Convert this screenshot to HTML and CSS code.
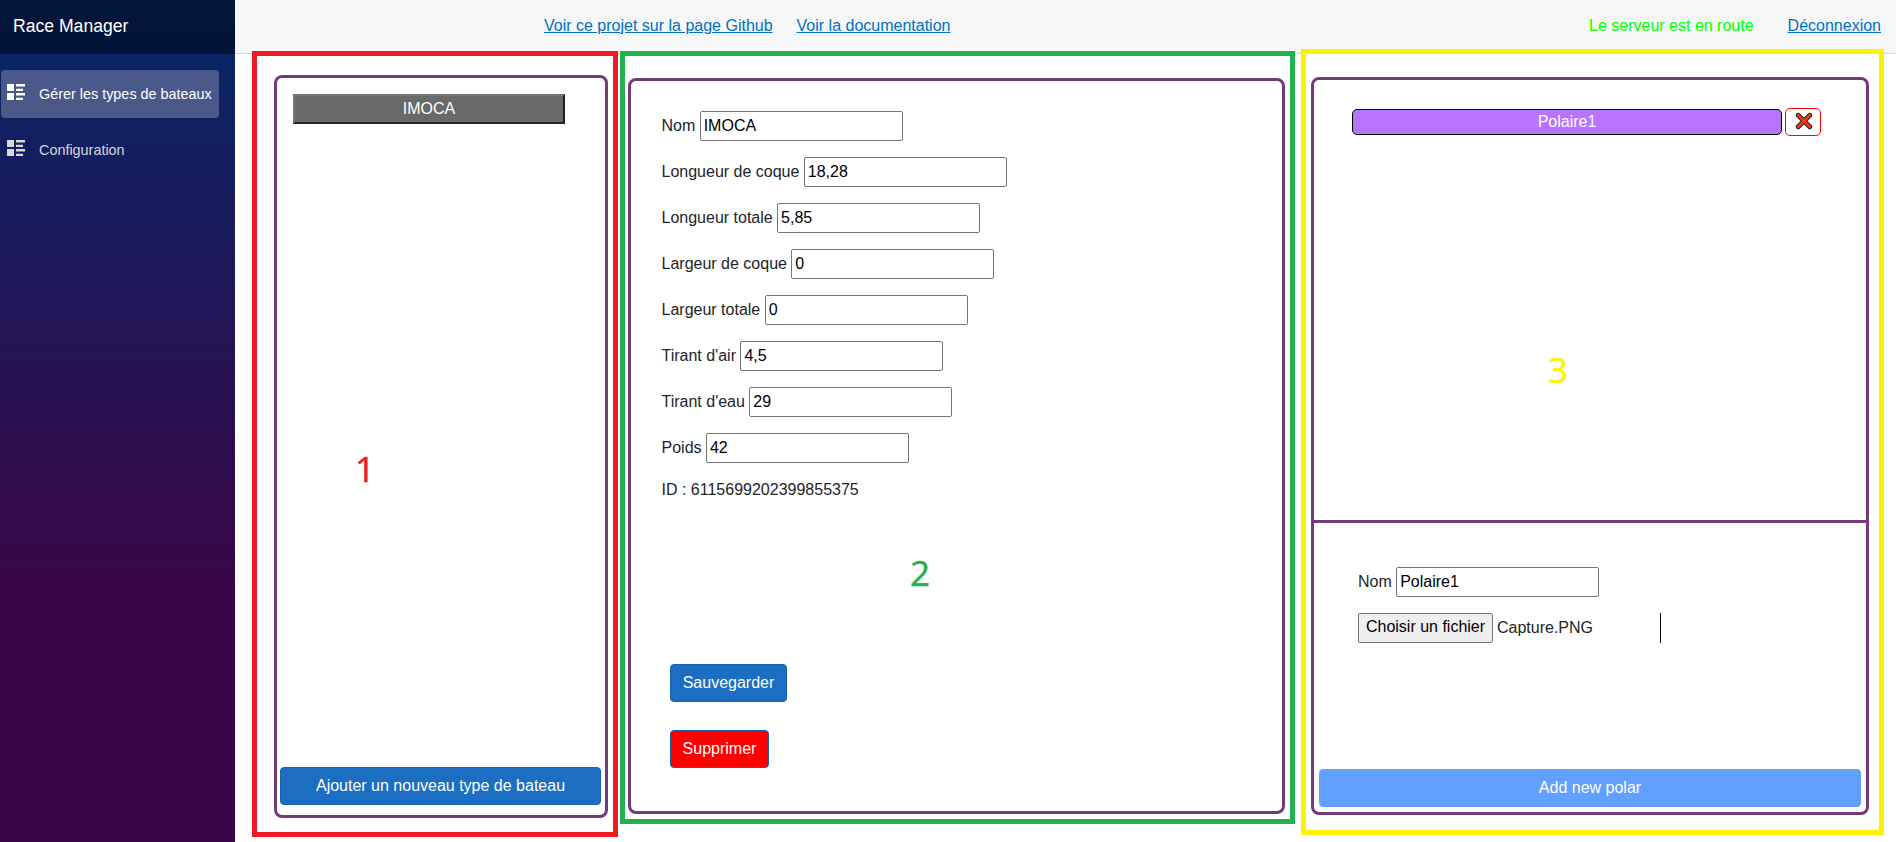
FILE: index.html
```html
<!DOCTYPE html>
<html lang="fr">
<head>
<meta charset="utf-8">
<title>Race Manager</title>
<link rel="stylesheet" href="styles.css">
</head>
<body>
<div class="page">
  <aside class="sidebar">
    <div class="brand">Race Manager</div>
    <nav class="nav">
      <a class="nav-item active">
        <svg class="nav-icon" viewBox="0 0 18 16"><path d="M0 0h7v7H0zM9 0h9v2.5H9zM9 4.7h7v2.3H9zM0 9h7v7H0zM9 9h9v2.5H9zM9 13.7h7v2.3H9z"/></svg>
        <span>Gérer les types de bateaux</span>
      </a>
      <a class="nav-item">
        <svg class="nav-icon" viewBox="0 0 18 16"><path d="M0 0h7v7H0zM9 0h9v2.5H9zM9 4.7h7v2.3H9zM0 9h7v7H0zM9 9h9v2.5H9zM9 13.7h7v2.3H9z"/></svg>
        <span>Configuration</span>
      </a>
    </nav>
  </aside>
  <main class="main">
    <header class="topbar">
      <a class="link github">Voir ce projet sur la page Github</a>
      <a class="link">Voir la documentation</a>
      <span class="status">Le serveur est en route</span>
      <a class="link">Déconnexion</a>
    </header>
    <div class="zones">
      <section class="zone zone-types">
        <div class="card">
          <button class="type-button">IMOCA</button>
          <button class="btn add-type">Ajouter un nouveau type de bateau</button>
        </div>
        <span class="number number-1">1</span>
      </section>
      <section class="zone zone-form">
        <div class="card form">
          <div class="field"><label>Nom</label><input value="IMOCA"></div>
          <div class="field"><label>Longueur de coque</label><input value="18,28"></div>
          <div class="field"><label>Longueur totale</label><input value="5,85"></div>
          <div class="field"><label>Largeur de coque</label><input value="0"></div>
          <div class="field"><label>Largeur totale</label><input value="0"></div>
          <div class="field"><label>Tirant d'air</label><input value="4,5"></div>
          <div class="field"><label>Tirant d'eau</label><input value="29"></div>
          <div class="field"><label>Poids</label><input value="42"></div>
          <div class="ident">ID : 6115699202399855375</div>
          <div class="actions">
            <button class="btn save">Sauvegarder</button>
            <button class="btn danger">Supprimer</button>
          </div>
        </div>
        <span class="number number-2">2</span>
      </section>
      <section class="zone zone-polars">
        <div class="card polars">
          <div class="polar-list">
            <button class="polar">Polaire1</button>
            <button class="remove" aria-label="Supprimer">
              <svg viewBox="0 0 18 18"><path class="cross-edge" d="M3.2 3.2L14.8 14.8M14.8 3.2L3.2 14.8"/><path class="cross" d="M3.2 3.2L14.8 14.8M14.8 3.2L3.2 14.8"/></svg>
            </button>
          </div>
          <div class="polar-form">
            <div class="field"><label>Nom</label><input value="Polaire1"></div>
            <div class="file"><button class="choose">Choisir un fichier</button><span>Capture.PNG</span></div>
            <button class="btn add-polar">Add new polar</button>
          </div>
        </div>
        <span class="number number-3">3</span>
      </section>
    </div>
  </main>
</div>
</body>
</html>
```

FILE: styles.css
```css
* { box-sizing: border-box; }
body {
  margin: 0;
  font: 16px/24px "Liberation Sans", Arial, sans-serif;
  color: #212529;
  background: #fff;
}
button, input { font: inherit; margin: 0; }
.page { display: flex; width: 1896px; height: 842px; overflow: hidden; }

.sidebar {
  width: 235px;
  flex: none;
  background: linear-gradient(180deg, rgb(5, 39, 103) 0%, #3a0647 70%);
}
.brand {
  height: 54px;
  padding: 1px 0 0 13px;
  background: rgba(0, 10, 30, .6);
  color: #fff;
  font-size: 17.6px;
  line-height: 50px;
}
.nav { padding: 16px 0 0 1px; display: flex; flex-direction: column; gap: 8px; }
.nav-item {
  display: flex;
  align-items: center;
  width: 218px;
  height: 48px;
  padding-left: 6px;
  gap: 14px;
  border-radius: 4px;
  color: #d7d7d7;
  font-size: 14.4px;
  white-space: nowrap;
}
.nav-item.active { background: rgba(255, 255, 255, .25); color: #fff; }
.nav-icon { width: 18px; height: 16px; flex: none; fill: currentColor; margin-bottom: 4px; }

.main { flex: 1; min-width: 0; }
.topbar {
  display: flex;
  align-items: center;
  height: 54px;
  padding: 0 15px 1px 309px;
  background: #f7f7f7;
  border-bottom: 1px solid #d6d5d5;
}
.link { color: #0071c1; text-decoration: underline; }
.github { margin-right: 24px; }
.status { margin: 0 34px 0 auto; color: #0f0; }

.zones { display: flex; align-items: flex-start; padding-left: 17px; }
.zone { position: relative; flex: none; display: flex; border: 5px solid; }
.zone-types { width: 366px; height: 786px; margin-top: -3px; padding: 19px 5px 14px 17px; border-color: #ed1c24; }
.zone-form { width: 675px; height: 773px; margin: -3px 0 0 2px; padding: 22px 5px 5px 3px; border-color: #22b14c; }
.zone-polars { width: 583px; height: 786px; margin: -5px 0 0 6px; padding: 23px 10px 15px 5px; border-color: #fff200; }

.card { flex: 1; display: flex; flex-direction: column; border: 3px solid #733b79; border-radius: 8px; }
.number {
  position: absolute;
  font: 35px/40px "Open Sans", "Noto Sans", sans-serif;
  -webkit-text-stroke: .5px currentColor;
}
.number-1 { left: 98px; top: 393px; color: #ed1c24; }
.number-2 { left: 285px; top: 497px; color: #22b14c; }
.number-3 { left: 242px; top: 296px; color: #fff200; }

.type-button {
  width: 272px;
  height: 30px;
  margin: 16px 0 0 16px;
  padding: 0;
  background: #696969;
  color: #fff;
  border: 2px solid;
  border-color: #767676 #212121 #212121 #767676;
}
.btn {
  height: 38px;
  padding: 0 0 1px;
  background: #1b6ec2;
  border: 1px solid #1861ac;
  border-radius: 4px;
  color: #fff;
}
.add-type { margin: auto 4px 10px 3px; }

.form { padding: 30px 0 0 30.5px; }
.field { display: flex; align-items: center; gap: 4.4px; height: 30px; margin-bottom: 16px; }
.field label { padding-bottom: 1px; }
.field input {
  width: 203px;
  height: 30px;
  padding: 0 3px 1px;
  border: 1px solid #767676;
  border-radius: 2px;
  background: #fff;
  color: #000;
}
.ident { margin-top: -1px; }
.actions { display: flex; flex-direction: column; align-items: flex-start; gap: 28px; margin: 162px 0 0 8.5px; }
.save { width: 117px; }
.danger { width: 99px; background: #f00; }

.polar-list {
  display: flex;
  align-items: flex-start;
  gap: 3px;
  height: 443px;
  padding: 28px 0 0 38px;
  border-bottom: 3px solid #733b79;
}
.polar {
  width: 430px;
  height: 26px;
  margin-top: 1px;
  padding: 0 0 2px;
  background: #b973ff;
  border: 1px solid #000;
  border-radius: 5px;
  color: #fff;
}
.remove {
  display: flex;
  align-items: center;
  justify-content: center;
  width: 36px;
  height: 28px;
  padding: 0 0 2px 1px;
  background: #fff;
  border: 1px solid #f00;
  border-radius: 5px;
}
.remove svg { width: 18px; height: 18px; fill: none; stroke-linecap: round; }
.cross-edge { stroke: #222; stroke-width: 4.8; }
.cross { stroke: #f03a17; stroke-width: 2.8; }

.polar-form { flex: 1; display: flex; flex-direction: column; padding: 44px 0 0 44px; }
.file {
  display: flex;
  align-items: center;
  gap: 4px;
  width: 303px;
  height: 30px;
  border-right: 1px solid #000;
}
.choose {
  width: 135px;
  height: 30px;
  padding: 0 0 2px;
  background: #efefef;
  border: 1px solid #767676;
  border-radius: 2px;
  color: #000;
  white-space: nowrap;
}
.file span { padding-bottom: 1px; }
.add-polar { margin: auto 5px 5px -39px; background: #62a0ff; border-color: #62a0ff; }
```
